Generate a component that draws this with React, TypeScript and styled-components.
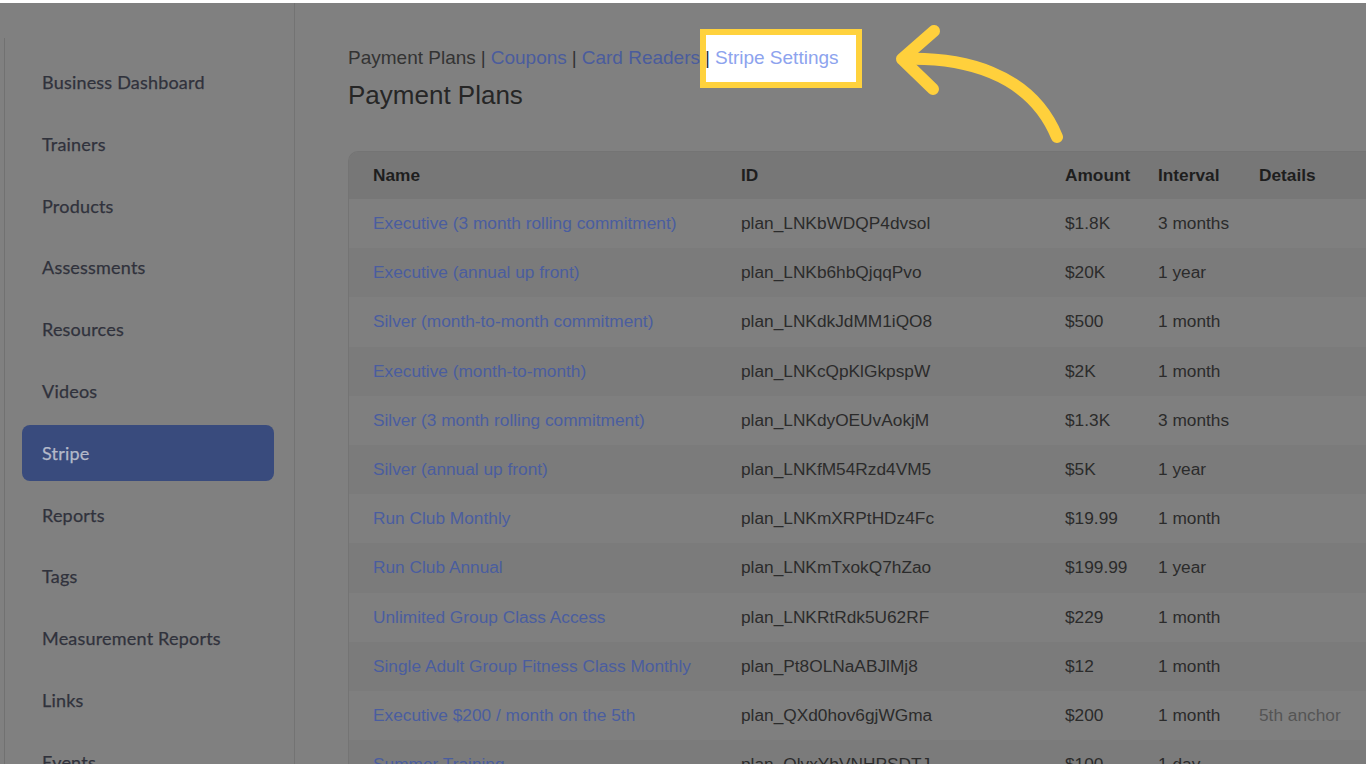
import React from 'react';
import styled, {createGlobalStyle} from "styled-components";

const Global = createGlobalStyle`
  html, body { margin: 0; padding: 0; background: #ffffff; }
  body { font-family: "Liberation Sans", Arial, sans-serif; }
`;

type Plan = { name: string; id: string; amount: string; interval: string; details?: string };

const plans: Plan[] = [
  {name: 'Executive (3 month rolling commitment)', id: 'plan_LNKbWDQP4dvsol', amount: '$1.8K', interval: '3 months'},
  {name: 'Executive (annual up front)', id: 'plan_LNKb6hbQjqqPvo', amount: '$20K', interval: '1 year'},
  {name: 'Silver (month-to-month commitment)', id: 'plan_LNKdkJdMM1iQO8', amount: '$500', interval: '1 month'},
  {name: 'Executive (month-to-month)', id: 'plan_LNKcQpKlGkpspW', amount: '$2K', interval: '1 month'},
  {name: 'Silver (3 month rolling commitment)', id: 'plan_LNKdyOEUvAokjM', amount: '$1.3K', interval: '3 months'},
  {name: 'Silver (annual up front)', id: 'plan_LNKfM54Rzd4VM5', amount: '$5K', interval: '1 year'},
  {name: 'Run Club Monthly', id: 'plan_LNKmXRPtHDz4Fc', amount: '$19.99', interval: '1 month'},
  {name: 'Run Club Annual', id: 'plan_LNKmTxokQ7hZao', amount: '$199.99', interval: '1 year'},
  {name: 'Unlimited Group Class Access', id: 'plan_LNKRtRdk5U62RF', amount: '$229', interval: '1 month'},
  {name: 'Single Adult Group Fitness Class Monthly', id: 'plan_Pt8OLNaABJlMj8', amount: '$12', interval: '1 month'},
  {name: 'Executive $200 / month on the 5th', id: 'plan_QXd0hov6gjWGma', amount: '$200', interval: '1 month', details: '5th anchor'},
  {name: 'Summer Training', id: 'plan_QlvxYbVNHPSDTJ', amount: '$100', interval: '1 day'},
];

const navItems = ['Business Dashboard', 'Trainers', 'Products', 'Assessments', 'Resources', 'Videos', 'Stripe', 'Reports', 'Tags', 'Measurement Reports', 'Links', 'Events'];

// the whole frame, white strip top & bottom
const Frame = styled.div`
  height: 768px;
  box-sizing: border-box;
  padding: 3px 0 4px;
  background: #ffffff;
`;

// dimmed screen (page under the tutorial overlay)
const Screen = styled.div`
  position: relative;
  height: 761px;
  display: flex;
  overflow: hidden;
  background: #808080;
`;

const Sidebar = styled.aside`
  width: 295px;
  flex-shrink: 0;
  box-sizing: border-box;
  border-right: 1px solid #737373;
`;

const Nav = styled.nav`
  margin: 35px 0 0 4px;
  padding: 16px 20px 0 17px;
  border-left: 1px solid #717171;
  display: flex;
  flex-direction: column;
  gap: 5.8px;
  height: 800px;
`;

const NavItem = styled.div<{ $active?: boolean }>`
  height: 56px;
  flex-shrink: 0;
  display: flex;
  align-items: center;
  padding-left: 20px;
  border-radius: 8px;
  font-family: Lato, "Open Sans", sans-serif;
  font-size: 18px;
  letter-spacing: 0.2px;
  color: ${p => p.$active ? '#b4b9c9' : '#30323c'};
  background: ${p => p.$active ? '#394b7d' : 'transparent'};
  -webkit-text-stroke: 0.25px currentColor;
`;

const Main = styled.main`
  flex: 1;
  padding: 44px 0 0 53px;
  min-width: 0;
`;

const Crumbs = styled.div`
  font-size: 19px;
  line-height: 22px;
  color: #333333;
  white-space: nowrap;
`;

const Sep = styled.span`
  color: #333333;
  margin: 0 5px;
`;

const CrumbLink = styled.a<{ $lit?: boolean }>`
  color: ${p => p.$lit ? '#8da3ee' : '#4a5c9d'};
  text-decoration: none;
`;

// spotlight box that sits over the dimming
const Highlight = styled.span`
  position: relative;
  z-index: 1;
  &::before {
    content: '';
    position: absolute;
    z-index: -1;
    top: -18px;
    bottom: -20px;
    left: 0;
    right: -23px;
    background: #ffffff;
    border: 6px solid #ffd23d;
  }
`;

const Title = styled.h1`
  margin: 11px 0 0;
  font-size: 26px;
  line-height: 30px;
  font-weight: 400;
  color: #262626;
`;

const Card = styled.div`
  margin-top: 41px;
  width: 1086px;
  border-top: 1px solid #747474;
  border-left: 1px solid #747474;
  border-top-left-radius: 10px;
  overflow: hidden;
`;

const Table = styled.table`
  width: 1086px;
  border-collapse: collapse;
  table-layout: fixed;
  font-size: 17.3px;
`;

const Th = styled.th<{ $w: number }>`
  box-sizing: border-box;
  width: ${p => p.$w}px;
  height: 47px;
  padding: 0 0 0 24px;
  text-align: left;
  font-weight: 700;
  color: #1e1e1e;
  background: #777777;
`;

const Tr = styled.tr<{ $odd: boolean }>`
  height: 49.2px;
  background: ${p => p.$odd ? '#7b7b7b' : '#7f7f7f'};
`;

const Td = styled.td<{ $tone?: 'link' | 'muted' }>`
  padding: 0 0 0 24px;
  white-space: nowrap;
  overflow: hidden;
  color: ${p => p.$tone === 'link' ? '#4a5d9f' : p.$tone === 'muted' ? '#555555' : '#2b2b2b'};
`;

const Pointer = styled.svg`
  position: absolute;
  inset: 0;
  pointer-events: none;
`;

export default function App() {
  return (
    <Frame>
      <Global />
      <Screen>
        <Sidebar>
          <Nav>
            {navItems.map(item => (
              <NavItem key={item} $active={item === 'Stripe'}>{item}</NavItem>
            ))}
          </Nav>
        </Sidebar>
        <Main>
          <Crumbs>
            Payment Plans<Sep>|</Sep>
            <CrumbLink>Coupons</CrumbLink><Sep>|</Sep>
            <CrumbLink>Card Readers</CrumbLink>
            <Highlight><Sep>|</Sep><CrumbLink $lit>Stripe Settings</CrumbLink></Highlight>
          </Crumbs>
          <Title>Payment Plans</Title>
          <Card>
            <Table>
              <thead>
                <tr>
                  <Th $w={368}>Name</Th>
                  <Th $w={324}>ID</Th>
                  <Th $w={93}>Amount</Th>
                  <Th $w={101}>Interval</Th>
                  <Th $w={200}>Details</Th>
                </tr>
              </thead>
              <tbody>
                {plans.map((p, i) => (
                  <Tr key={p.id} $odd={i % 2 === 1}>
                    <Td $tone="link">{p.name}</Td>
                    <Td>{p.id}</Td>
                    <Td>{p.amount}</Td>
                    <Td>{p.interval}</Td>
                    <Td $tone="muted">{p.details}</Td>
                  </Tr>
                ))}
              </tbody>
            </Table>
          </Card>
        </Main>
        <Pointer width="1366" height="761" viewBox="0 0 1366 761">
          <g fill="none" stroke="#ffd03c" strokeWidth="12" strokeLinecap="round" strokeLinejoin="round">
            <path d="M903 56 C960 54, 1030 68, 1057 134" />
            <path d="M934 28 L902 56 L933 86" />
          </g>
        </Pointer>
      </Screen>
    </Frame>
  );
}
